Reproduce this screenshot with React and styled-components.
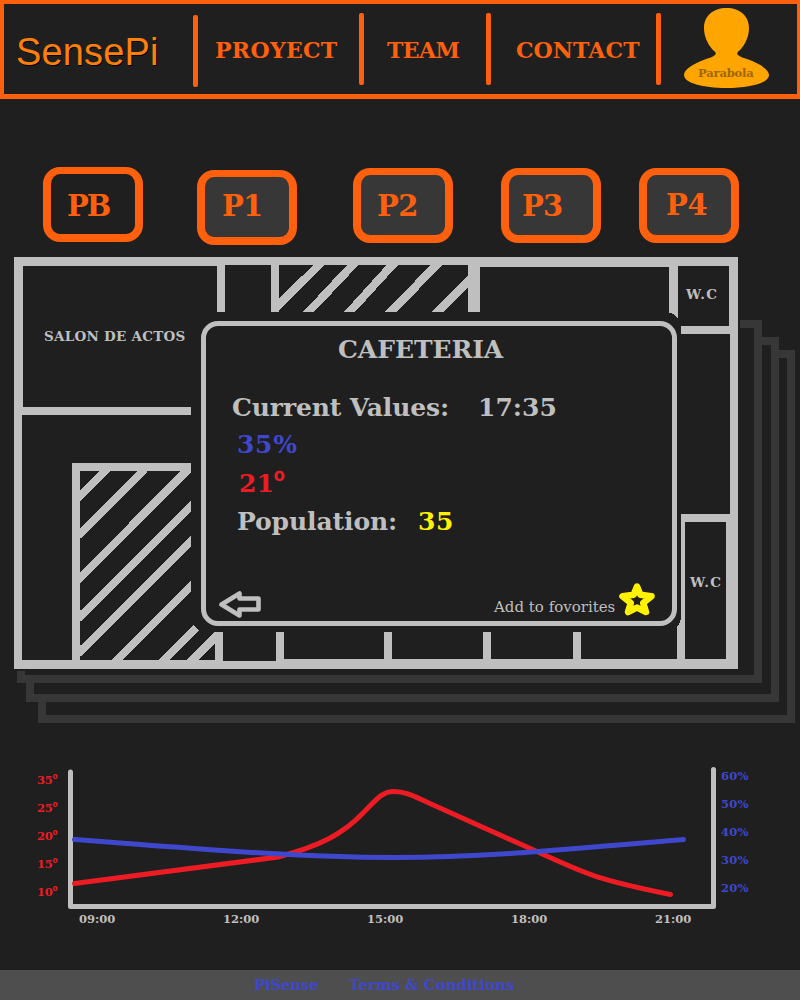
import React from "react";
import styled, { createGlobalStyle, css } from "styled-components";

const c = {
  bg: "#1f1f1f",
  panel: "#373737",
  orange: "#ff600d",
  wall: "#bfbfbf",
  blue: "#3f48cc",
  red: "#ed1c24",
  yellow: "#fff200",
  amber: "#ffa500",
};

const Global = createGlobalStyle`
  *, *::before, *::after { box-sizing: border-box; }
  body { margin: 0; background: ${c.bg}; }
`;

const slab = css`
  font-family: "DejaVu Serif", serif;
  font-weight: bold;
  white-space: nowrap;
`;

const Page = styled.div`
  width: 800px;
  height: 1000px;
  display: flex;
  flex-direction: column;
  background: ${c.bg};
  overflow: hidden;
  ${slab}
`;

/* Header */
const Header = styled.header`
  flex: none;
  height: 99px;
  display: flex;
  border: solid ${c.orange};
  border-width: 4px 3px 5px 4px;
`;

const Logo = styled.div`
  width: 189px;
  padding-left: 12px;
  font: 38px/97px "Liberation Sans", Arial, sans-serif;
  letter-spacing: 0.15px;
  color: #ff7f0a;
  text-shadow: 1px 1px 0 #000;
`;

const Divider = styled.span`
  width: 5px;
  height: 72px;
  margin-top: ${(p) => p.$top}px;
  border-radius: 2px;
  background: ${c.orange};
`;

const NavLink = styled.a`
  width: ${(p) => p.$width}px;
  padding-left: ${(p) => p.$indent}px;
  font-size: 22px;
  line-height: 92px;
  letter-spacing: ${(p) => p.$track || 0}px;
  color: ${c.orange};
`;

const User = styled.div`
  position: relative;
  width: 87px;
  height: 81px;
  margin: 4px 0 0 22px;
  svg { display: block; }
`;

const UserName = styled.span`
  position: absolute;
  left: 15px;
  top: 57px;
  font-size: 11.5px;
  line-height: 16px;
  letter-spacing: -0.15px;
  color: #9e6600;
`;

/* Floor selector */
const Floors = styled.nav`
  flex: none;
  height: 158px;
  padding: 68px 0 0 43px;
  display: flex;
  align-items: flex-start;
`;

const Floor = styled.button`
  ${slab}
  flex: none;
  width: 100px;
  height: 75px;
  margin: ${(p) => p.$drop}px ${(p) => p.$gap}px 0 0;
  padding: 0 0 0 ${(p) => p.$indent}px;
  border: solid ${c.orange};
  border-width: 7px 8px 8px;
  border-radius: 17px;
  background: ${(p) => (p.$active ? "transparent" : c.panel)};
  color: ${c.orange};
  font-size: 29px;
  line-height: ${(p) => p.$line}px;
  text-align: left;
  letter-spacing: ${(p) => p.$track || 0}px;
  display: flex;
`;

/* Floor plan with the room card over it */
const Plan = styled.main`
  flex: none;
  position: relative;
  height: 470px;
  svg { display: block; }
`;

const RoomLabel = styled.span`
  position: absolute;
  left: ${(p) => p.$x}px;
  top: ${(p) => p.$y}px;
  font-size: 13.5px;
  line-height: 16px;
  letter-spacing: ${(p) => p.$track || 0}px;
  color: ${c.wall};
`;

const Card = styled.section`
  position: absolute;
  left: 201px;
  top: 64px;
  width: 476px;
  height: 305px;
  display: flex;
  flex-direction: column;
  border: 5px solid ${c.wall};
  border-radius: 17px;
  background: ${c.bg};
  color: ${c.wall};
`;

const CardTitle = styled.h1`
  margin: 1px 0 16px;
  padding-left: 132px;
  font-size: 25px;
  line-height: 46px;
  letter-spacing: -0.05px;
`;

const Reading = styled.div`
  display: flex;
  height: ${(p) => p.$height}px;
  padding-left: ${(p) => p.$indent}px;
  font-size: 25px;
  line-height: ${(p) => p.$height}px;
`;

const Value = styled.span`
  width: ${(p) => (p.$width ? p.$width + "px" : "auto")};
  color: ${(p) => p.$color || c.wall};
  letter-spacing: ${(p) => p.$track || 0}px;
`;

const Ordinal = styled.span`
  font-family: "Liberation Sans", Arial, sans-serif;
  font-size: 1.2em;
  line-height: 0;
`;

const CardFooter = styled.div`
  display: flex;
  height: 38px;
  margin-top: auto;
  padding-left: 12px;
`;

const BackButton = styled.a`
  width: 276px;
  padding-top: 7px;
`;

const Favorite = styled.a`
  display: flex;
  font-size: 15px;
  font-weight: normal;
  line-height: 48px;
  span { width: 124px; }
`;

/* Chart */
const Chart = styled.section`
  flex: none;
  height: 243px;
  padding-top: 41px;
`;

const ChartBody = styled.div`
  display: flex;
  height: 143px;
`;

const Plot = styled.svg`
  flex: none;
  overflow: visible;
`;

const Scale = styled.div`
  display: flex;
  flex: none;
  flex-direction: column;
  width: ${(p) => p.$width}px;
  margin-top: ${(p) => p.$lift}px;
  padding-left: ${(p) => p.$indent}px;
  color: ${(p) => p.$color};
  font-size: 11.5px;
  line-height: 28px;
  letter-spacing: ${(p) => p.$track || 0}px;
`;

const Times = styled.div`
  display: flex;
  padding-left: 79px;
  font-size: 11.5px;
  line-height: 16px;
  color: ${c.wall};
  span { width: 144px; }
`;

const Footer = styled.footer`
  flex: none;
  display: flex;
  height: 30px;
  padding-left: 254px;
  background: #4e4e4e;
  font-size: 15px;
  line-height: 30px;
  color: ${c.blue};
`;

const FooterLink = styled.a`
  width: ${(p) => (p.$width ? p.$width + "px" : "auto")};
  letter-spacing: ${(p) => p.$track || 0}px;
`;

const rooms = [
  [23, 266, 217, 407], [225, 265, 271, 330], [279, 265, 468, 330],
  [480, 267, 669, 330], [678, 266, 729, 326], [681, 334, 730, 514],
  [685, 522, 726, 659], [22, 415, 220, 463], [22, 460, 72, 660],
  [80, 471, 215, 660], [223, 620, 276, 661], [284, 620, 384, 659],
  [392, 620, 483, 659], [491, 620, 573, 659], [581, 620, 677, 659],
];

const hatches = [
  "313.5,265 325,265 279,310 279,298", "347,265 358.5,265 314,312 303,312",
  "386.5,265 398,265 355,312 344,312", "430.5,265 442,265 397,312 385,312",
  "468,276 468,287 443,312 431,312",
  "99.5,471 110.5,471 80,501 80,490", "138,471 147,471 147,473 80,539 80,528",
  "180,471 192,471 80,584 80,573", "191,501 191,512 80,622 80,611",
  "191,536 191,547 80,657 80,646", "191,580 191,591 122,660 111,660",
  "193.5,625 199,630.5 170,660 159,660", "214,632 216,632 216,643 198,660 187,660",
];

const layers = [
  "M740 324H758V679H21V671", "M762 341H775V698H30V683", "M779 354H791V719H42V702",
];

function FloorDrawing() {
  return (
    <svg width="800" height="470" viewBox="0 257 800 470" shapeRendering="crispEdges">
      {layers.map((d) => (
        <path key={d} d={d} fill="none" stroke={c.panel} strokeWidth="8" />
      ))}
      <rect x="14" y="257" width="724" height="412" fill={c.wall} />
      {rooms.map(([x1, y1, x2, y2]) => (
        <rect key={`${x1}-${y1}`} x={x1} y={y1} width={x2 - x1} height={y2 - y1} fill={c.bg} />
      ))}
      {hatches.map((p) => (
        <polygon key={p} points={p} fill={c.wall} />
      ))}
      <rect x="191" y="312" width="490" height="320" rx="16" fill={c.bg} />
      <rect x="191" y="312" width="30" height="30" fill={c.bg} />
    </svg>
  );
}

function Series() {
  return (
    <Plot width="650" height="143" viewBox="67 768 650 143">
      <g fill="none" strokeWidth="5" strokeLinecap="round" strokeLinejoin="round">
        <path d="M70.5 772V906.500H713.500V769.500" stroke={c.wall} />
        <path
          d="M74.500 883.500L278 857C320 846 343 834 363 813C377 799 382 791.500 394 791.500C407 791.500 417 798 430 803.500L538 852C590 876 600 880 670.500 894.500"
          stroke={c.red}
        />
        <path d="M74.500 839.500C200 849 300 857.500 393 857.500C480 857.500 560 850 683.500 839.500" stroke={c.blue} />
      </g>
    </Plot>
  );
}

export default function App() {
  return (
    <>
      <Global />
      <Page>
        <Header>
          <Logo>SensePi</Logo>
          <Divider $top={11} />
          <NavLink $width={161} $indent={17} $track={0.3}>PROYECT</NavLink>
          <Divider $top={9} />
          <NavLink $width={122} $indent={23} $track={-0.6}>TEAM</NavLink>
          <Divider $top={9} />
          <NavLink $width={165} $indent={25} $track={0.1}>CONTACT</NavLink>
          <Divider $top={9} />
          <User>
            <svg width="87" height="81" viewBox="683 8 87 81">
              <path
                d="M726.500 8C740 8 749 16 749 28C749 37 745 44 741 49C738 52 736 53 738 55C740 57 744 58 747 59C761 64 769 70 769 75C769 83 750 88 726.500 88C703 88 684 83 684 75C684 70 692 64 706 59C709 58 713 57 715 55C717 53 715 52 712 49C708 44 704 37 704 28C704 16 713 8 726.500 8Z"
                fill={c.amber}
              />
            </svg>
            <UserName>Parabola</UserName>
          </User>
        </Header>

        <Floors>
          <Floor $active $drop={0} $gap={54} $indent={16} $line={64} $track={-2}>PB</Floor>
          <Floor $drop={3} $gap={56} $indent={17} $line={58} $track={-0.7}>P1</Floor>
          <Floor $drop={1} $gap={48} $indent={16} $line={62} $track={-0.5}>P2</Floor>
          <Floor $drop={1} $gap={38} $indent={13} $line={62} $track={-0.7}>P3</Floor>
          <Floor $drop={1} $gap={0} $indent={19} $line={60} $track={-0.2}>P4</Floor>
        </Floors>

        <Plan>
          <FloorDrawing />
          <RoomLabel $x={44} $y={71} $track={0.25}>SALON DE ACTOS</RoomLabel>
          <RoomLabel $x={686} $y={29} $track={1.3}>W.C</RoomLabel>
          <RoomLabel $x={690} $y={317} $track={1.3}>W.C</RoomLabel>
          <Card>
            <CardTitle>CAFETERIA</CardTitle>
            <Reading $height={38} $indent={26}>
              <Value $width={246} $track={-0.12}>Current Values:</Value>
              <Value>17:35</Value>
            </Reading>
            <Reading $height={36} $indent={31}>
              <Value $color={c.blue} $track={0.7}>35%</Value>
            </Reading>
            <Reading $height={42} $indent={33}>
              <Value $color={c.red}>21<Ordinal>º</Ordinal></Value>
            </Reading>
            <Reading $height={34} $indent={31}>
              <Value $width={181} $track={-0.1}>Population:</Value>
              <Value $color={c.yellow} $track={0.6}>35</Value>
            </Reading>
            <CardFooter>
              <BackButton aria-label="Back">
                <svg width="46" height="30" viewBox="218 590 46 30">
                  <path d="M221.500 604.500L239.500 593.500V598.500H258.500V609.500H239.500V615.500Z" fill="none" stroke={c.wall} strokeWidth="4.600" strokeLinejoin="round" />
                </svg>
              </BackButton>
              <Favorite>
                <span>Add to fovorites</span>
                <svg width="38" height="34" viewBox="618 583 38 34">
                  <path d="M637 586.500L640.400 594.800L651.500 596.300L643.200 603L646 612L637 607.600L628 612L630.800 603L622.500 596.300L633.600 594.800Z" fill="none" stroke={c.yellow} strokeWidth="6.500" strokeLinejoin="round" />
                </svg>
              </Favorite>
            </CardFooter>
          </Card>
        </Plan>

        <Chart>
          <ChartBody>
            <Scale $width={67} $indent={37} $lift={-2} $track={-0.3} $color={c.red}>
              {[35, 25, 20, 15, 10].map((t) => (
                <span key={t}>{t}<Ordinal>º</Ordinal></span>
              ))}
            </Scale>
            <Series />
            <Scale $width={83} $indent={4} $lift={-6} $track={0.2} $color={c.blue}>
              <span>60%</span><span>50%</span><span>40%</span><span>30%</span><span>20%</span>
            </Scale>
          </ChartBody>
          <Times>
            <span>09:00</span><span>12:00</span><span>15:00</span><span>18:00</span><span>21:00</span>
          </Times>
        </Chart>

        <Footer>
          <FooterLink $width={95} $track={-0.3}>PiSense</FooterLink>
          <FooterLink $track={-0.05}>Terms &amp; Conditions</FooterLink>
        </Footer>
      </Page>
    </>
  );
}
